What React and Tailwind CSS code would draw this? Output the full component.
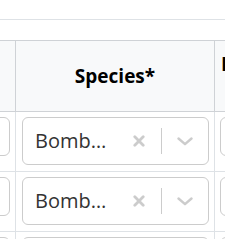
import React from 'react';

const rows = [
    { id: 1, species: 'Bombus terrestris' },
    { id: 2, species: 'Bombus terrestris' },
    { id: 3, species: 'Bombus terrestris' },
];

const ClearIcon = () => (
    <svg width="12" height="12" viewBox="0 0 12 12" className="shrink-0">
        <path d="M1.8 1.8 L10.2 10.2 M10.2 1.8 L1.8 10.2" stroke="#cccccc" strokeWidth="2.8" strokeLinecap="round" />
    </svg>
);

const ChevronIcon = () => (
    <svg width="16" height="9" viewBox="0 0 16 9" className="shrink-0">
        <path d="M1.5 1.5 L8 7.2 L14.5 1.5" fill="none" stroke="#cccccc" strokeWidth="2.4" strokeLinecap="round" strokeLinejoin="round" />
    </svg>
);

const SpeciesSelect = ({ value }) => (
    <div className="flex h-[48px] w-full items-center rounded-[6px] border border-[#cccccc] bg-white">
        <div className="min-w-0 flex-1 pl-[12px]">
            <div className="w-[72px] truncate text-[20px] text-[#333333]">{value}</div>
        </div>
        <div className="flex items-center">
            <div className="pl-[8px] pr-[16px]"><ClearIcon /></div>
            <div className="h-[26px] w-px bg-[#cccccc]"></div>
            <div className="pl-[15px] pr-[15px]"><ChevronIcon /></div>
        </div>
    </div>
);

export default function App() {
    return (
        <div className="h-[239px] w-[225px] overflow-hidden bg-white" style={{ fontFamily: '"Open Sans", "Noto Sans", sans-serif' }}>
            <div className="h-[20px] border-b border-[#dee2e6]"></div>
            <div className="h-[20px]"></div>

            <div className="ml-[-84px] w-max">
                {/* header */}
                <div className="flex h-[72px] border-y border-[#cfd2d6] bg-[#f8f9fa] text-[19px] font-bold text-black">
                    <div className="w-[100px] border-r border-[#cfd2d6]"></div>
                    <div className="flex w-[199px] items-center justify-center border-r border-[#cfd2d6]">Species*</div>
                    <div className="flex w-[200px] items-center px-[6px] leading-[24px]">
                        <div className="w-max text-center">Bumblebee<br />caste*</div>
                    </div>
                </div>

                {/* rows */}
                {rows.map(row => (
                    <div key={row.id} className="flex h-[60px] border-b border-[#dee2e6]">
                        <div className="w-[100px] border-r border-[#dee2e6] px-[5px] pt-[5px]">
                            <div className="h-[39px] rounded-[6px] border border-[#cccccc]"></div>
                        </div>
                        <div className="w-[199px] border-r border-[#dee2e6] pl-[6px] pr-[5px] pt-[5px]">
                            <SpeciesSelect value={row.species} />
                        </div>
                        <div className="w-[200px] px-[5px] pt-[5px]">
                            <div className="h-[39px] rounded-[6px] border border-[#cccccc]"></div>
                        </div>
                    </div>
                ))}
            </div>
        </div>
    );
}
